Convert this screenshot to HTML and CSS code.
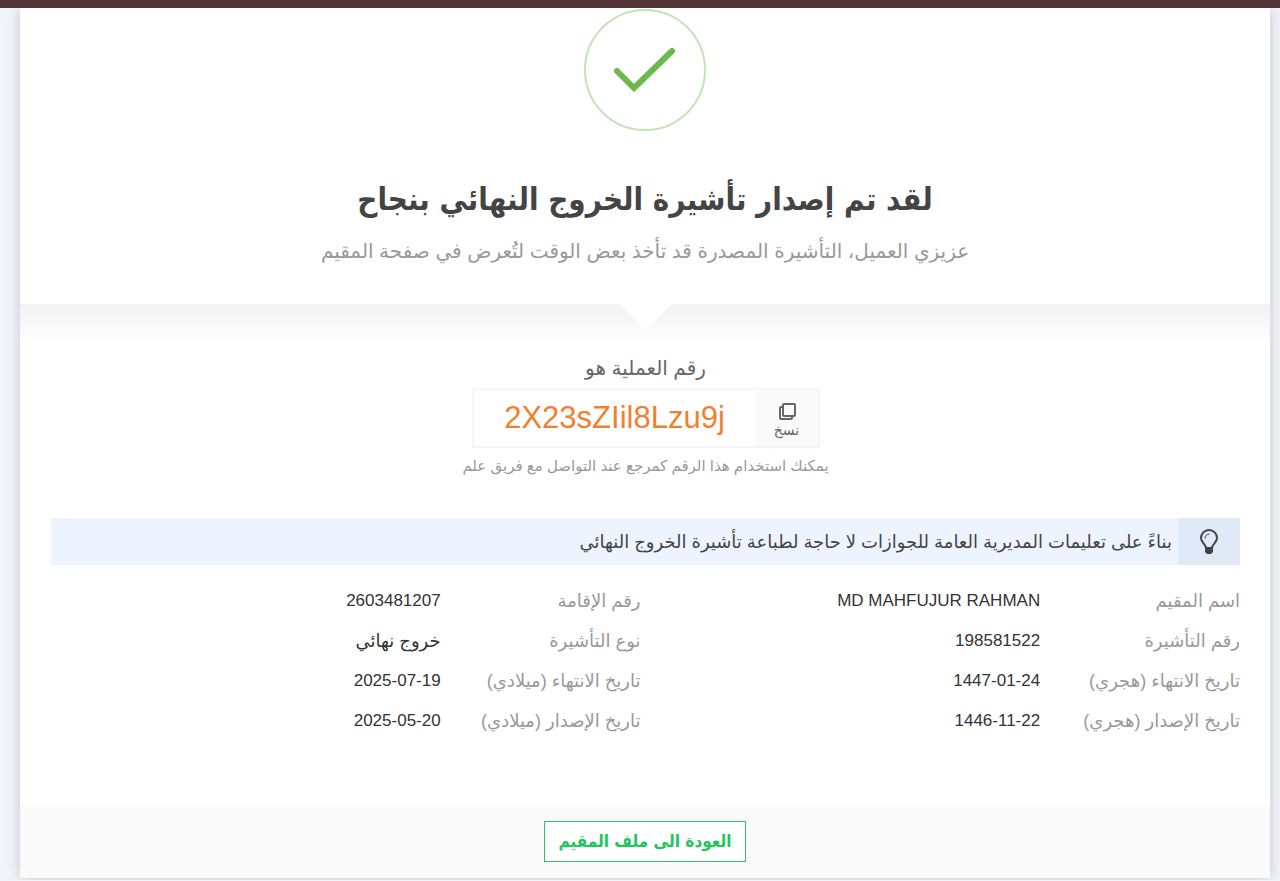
FILE: index.html
```html
<!DOCTYPE html>
<html lang="ar" dir="rtl">
  <head>
    <meta charset="UTF-8" />
    <meta name="viewport" content="width=device-width, initial-scale=1.0" />
    <title>تأشيرة الخروج النهائي</title>
    <link rel="stylesheet" href="styles.css">
  </head>

  <body>
    <header class="top-bar"></header>
    <main class="card">
      <section class="success">
        <svg class="success-icon" viewBox="0 0 122 122" fill="none" aria-hidden="true">
          <circle cx="61" cy="61" r="60" stroke="#c5e3b8" stroke-width="2" />
          <path d="M33 62L50 79L88 42" stroke="#6fb84c" stroke-width="6" stroke-linecap="round" />
        </svg>
        <h1>لقد تم إصدار تأشيرة الخروج النهائي بنجاح</h1>
        <p>عزيزي العميل، التأشيرة المصدرة قد تأخذ بعض الوقت لتُعرض في صفحة المقيم</p>
      </section>

      <section class="details">
        <div class="arrow"></div>
        <h2>رقم العملية هو</h2>
        <div class="reference">
          <button type="button" class="copy-button">
            <svg viewBox="0 0 20 20" fill="none" stroke="#666" stroke-width="2" aria-hidden="true">
              <rect x="6" y="2" width="12" height="12" rx="1" />
              <path d="M6 5H4a1 1 0 0 0-1 1v10a1 1 0 0 0 1 1h10a1 1 0 0 0 1-1v-2" />
            </svg>
            <span>نسخ</span>
          </button>
          <span class="reference-number" dir="ltr">2X23sZIil8Lzu9j</span>
        </div>
        <p class="hint">يمكنك استخدام هذا الرقم كمرجع عند التواصل مع فريق علم</p>

        <div class="notice">
          <div class="notice-icon">
            <svg viewBox="0 0 20 26" fill="none" stroke="#444" stroke-width="2" aria-hidden="true">
              <path d="M7 19C7 15 2 14 2 9a8 8 0 0 1 16 0c0 5-5 6-5 10z" />
              <path d="M6 9a4 4 0 0 1 4-4" stroke-width="1" stroke-linecap="round" />
              <path d="M6 20h8v3l-2 2H8l-2-2z" fill="#444" stroke="none" />
            </svg>
          </div>
          <p>بناءً على تعليمات المديرية العامة للجوازات لا حاجة لطباعة تأشيرة الخروج النهائي</p>
        </div>

        <dl class="info">
          <dt>اسم المقيم</dt>
          <dd>MD MAHFUJUR RAHMAN</dd>
          <dt>رقم الإقامة</dt>
          <dd>2603481207</dd>
          <dt>رقم التأشيرة</dt>
          <dd>198581522</dd>
          <dt>نوع التأشيرة</dt>
          <dd class="arabic">خروج نهائي</dd>
          <dt>تاريخ الانتهاء (هجري)</dt>
          <dd><bdi dir="ltr">1447-01-24</bdi></dd>
          <dt>تاريخ الانتهاء (ميلادي)</dt>
          <dd><bdi dir="ltr">2025-07-19</bdi></dd>
          <dt>تاريخ الإصدار (هجري)</dt>
          <dd><bdi dir="ltr">1446-11-22</bdi></dd>
          <dt>تاريخ الإصدار (ميلادي)</dt>
          <dd><bdi dir="ltr">2025-05-20</bdi></dd>
        </dl>
      </section>

      <footer>
        <a class="back-button" href="#">العودة الى ملف المقيم</a>
      </footer>
    </main>
  </body>
</html>
```
FILE: styles.css
```css
* {
  box-sizing: border-box;
}

body {
  font-family: "Liberation Sans", "DejaVu Sans", sans-serif;
  background-color: #f2f6fb;
  color: #333;
  margin: 0;
}

h1,
h2,
p,
dl,
dd {
  margin: 0;
}

.top-bar {
  position: relative;
  height: 8px;
  background-color: #533439;
}

.card {
  margin: 0 10px 2px 20px;
  background-color: #fff;
  box-shadow: 0 0 14px rgba(0, 0, 0, 0.2);
}

.success {
  display: flex;
  flex-direction: column;
  align-items: center;
  height: 296px;
  text-align: center;
}

.success-icon {
  width: 122px;
  height: 122px;
  margin-top: 1px;
}

.success h1 {
  margin-top: 40px;
  font-family: "DejaVu Sans Condensed", "DejaVu Sans", sans-serif;
  font-size: 31px;
  line-height: 56px;
  color: #444;
}

.success p {
  margin-top: 8px;
  font-size: 20px;
  line-height: 32px;
  color: #999;
}

.details {
  padding: 0 30px 64px 31px;
  background: linear-gradient(#f2f2f2, #fff 40px);
  text-align: center;
}

.arrow {
  width: 52px;
  height: 26px;
  margin: 0 auto;
  background-color: #fff;
  clip-path: polygon(0 0, 100% 0, 50% 100%);
}

.details h2 {
  margin-top: 22px;
  font-size: 20px;
  font-weight: normal;
  line-height: 32px;
  color: #666;
}

.reference {
  display: flex;
  width: 348px;
  height: 60px;
  margin: 4px auto 0;
  border: 2px solid #f5f5f5;
}

.copy-button {
  display: flex;
  flex-direction: column;
  align-items: center;
  justify-content: center;
  width: 62px;
  padding: 4px 0 0;
  border: none;
  background-color: #fafafa;
  font-family: inherit;
  font-size: 14px;
  line-height: 16px;
  color: #666;
  cursor: pointer;
}

.copy-button svg {
  width: 20px;
  height: 20px;
}

.reference-number {
  flex: 1;
  font-size: 31px;
  line-height: 56px;
  color: #f08030;
}

.hint {
  margin-top: 4px;
  font-size: 15px;
  line-height: 28px;
  color: #999;
}

.notice {
  display: flex;
  align-items: center;
  height: 47px;
  margin-top: 38px;
  background-color: #eef4ff;
}

.notice-icon {
  display: flex;
  align-items: center;
  justify-content: center;
  width: 62px;
  height: 100%;
  background-color: #e0e9f8;
}

.notice-icon svg {
  width: 20px;
  height: 26px;
}

.notice p {
  padding: 0 6px;
  font-size: 18px;
  color: #444;
}

.info {
  display: grid;
  grid-template-columns: 1fr 2fr 1fr 2fr;
  margin: 16px 0 0 -10px;
  font-size: 17px;
  line-height: 40px;
  text-align: start;
}

.info dt,
.info .arabic {
  font-size: 18px;
}

.info dt {
  color: #999;
}

footer {
  display: flex;
  justify-content: center;
  padding: 16px;
  background-color: #fafafa;
}

.back-button {
  padding: 0 14px;
  border: 1px solid #2fc068;
  background-color: #fff;
  font-family: "DejaVu Sans Condensed", "DejaVu Sans", sans-serif;
  font-size: 17px;
  font-weight: bold;
  line-height: 39px;
  color: #22c55e;
  text-decoration: none;
}
```
